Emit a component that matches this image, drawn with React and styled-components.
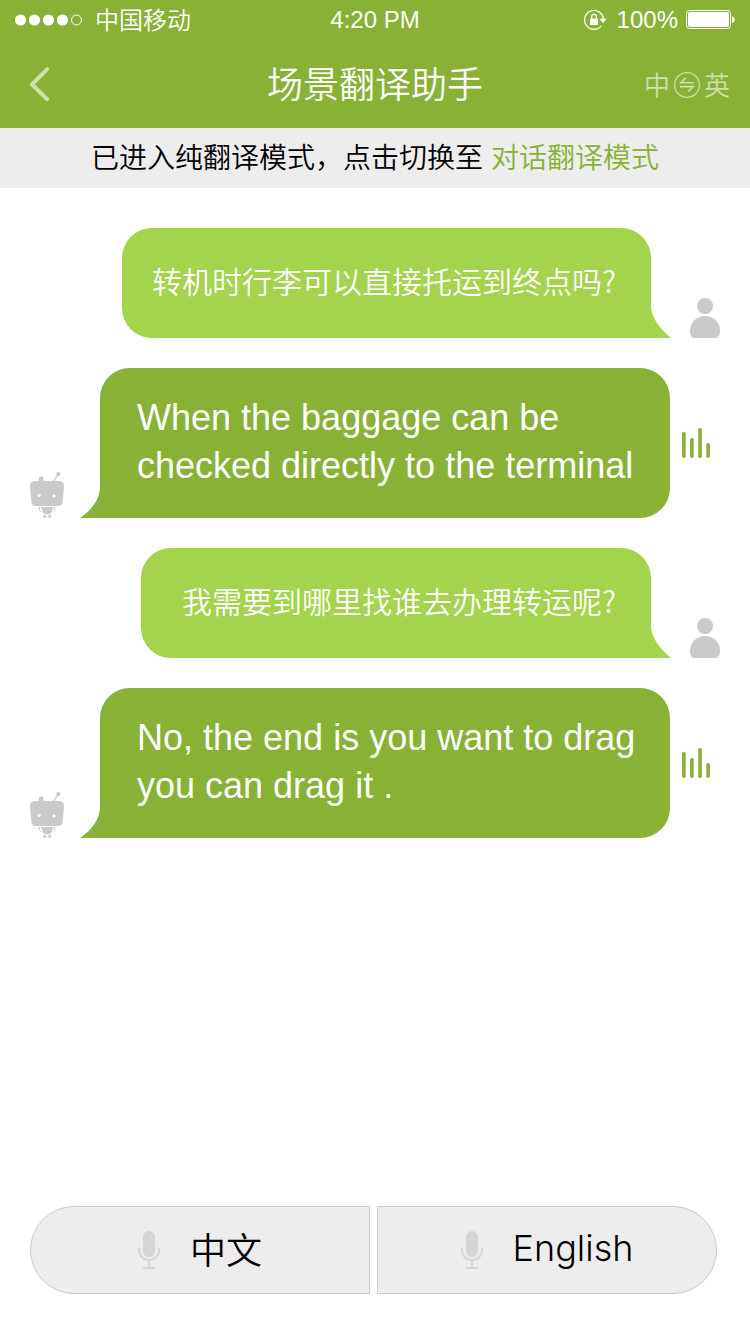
import React from "react";
import styled, { createGlobalStyle, css } from "styled-components";

const green = "#88b135";
const lightGreen = "#a4d34d";
const grey = "#cacaca";
const cjk = '"Noto Sans CJK SC", sans-serif';
const latin = '"Liberation Sans", "Noto Sans CJK SC", sans-serif';

const GlobalStyle = createGlobalStyle`
  * { box-sizing: border-box; }
  body { margin: 0; background: #fff; }
  button { margin: 0; padding: 0; border: 0; background: none; font: inherit; color: inherit; cursor: pointer; }
  svg { display: block; flex: none; }
`;

const Page = styled.div`
  display: flex;
  flex-direction: column;
  min-height: 100vh;
  font-family: ${cjk};
  font-weight: 350;
  color: #000;
`;

const Header = styled.header`
  background: ${green};
  color: #fff;
`;

const StatusBar = styled.div`
  display: grid;
  grid-template-columns: 1fr auto 1fr;
  align-items: center;
  height: 40px;
  padding: 0 15px;
  font-size: 24px;
  line-height: 40px;
`;

const Carrier = styled.div`
  display: flex;
  align-items: center;
  gap: 12px;
`;

const CarrierName = styled.span`
  padding-bottom: 2px;
  line-height: 38px;
`;

const Clock = styled.time`
  font-family: ${latin};
  font-weight: 400;
`;

const Power = styled.div`
  display: flex;
  align-items: center;
  justify-content: flex-end;
  gap: 8px;
  font-family: ${latin};
  font-weight: 400;
`;

const NavBar = styled.nav`
  display: grid;
  grid-template-columns: 1fr auto 1fr;
  align-items: center;
  height: 88px;
  padding: 0 20px;
`;

const BackButton = styled.button`
  justify-self: start;
  padding: 8px;
`;

const Title = styled.h1`
  margin: 0;
  padding-bottom: 4px;
  font-size: 36px;
  line-height: 84px;
  font-weight: inherit;
`;

const LanguageSwitch = styled.button`
  justify-self: end;
  display: flex;
  align-items: center;
  gap: 4px;
  font-size: 26px;
  line-height: 40px;
  opacity: 0.6;
`;

const Notice = styled.p`
  display: flex;
  justify-content: center;
  gap: 8px;
  margin: 0;
  padding: 0 20px 4px;
  background: #ededed;
  font-size: 28px;
  line-height: 56px;
`;

const ModeLink = styled.a`
  color: ${green};
  text-decoration: none;
`;

const Messages = styled.ul`
  flex: 1;
  display: flex;
  flex-direction: column;
  gap: 30px;
  margin: 0;
  padding: 40px 30px;
  list-style: none;
`;

const Message = styled.li`
  display: flex;
  align-items: flex-end;
  justify-content: ${(p) => (p.$own ? "flex-end" : "flex-start")};
  gap: ${(p) => (p.$own ? "39px" : "36px")};
`;

const Bubble = styled.div`
  position: relative;
  color: #fff;
  ${(p) =>
    p.$own
      ? css`
          min-width: 510px;
          padding: 27px 35px 33px 30px;
          border-radius: 30px 30px 0 30px;
          background: ${lightGreen};
          font-size: 30px;
          line-height: 50px;
          text-align: right;
        `
      : css`
          flex: 1;
          padding: 26px 30px 28px 37px;
          border-radius: 30px 30px 30px 0;
          background: ${green};
          font-family: ${latin};
          font-weight: 400;
          font-size: 36px;
          line-height: 48px;
        `}
`;

const Tail = styled.svg`
  position: absolute;
  bottom: 0;
  ${(p) => (p.$own ? "left: 100%;" : "right: 100%;")}
`;

const Reply = styled.div`
  flex: 1;
  display: flex;
  align-items: center;
  gap: 12px;
  padding-right: 10px;
`;

const PlayButton = styled.button`
  flex: none;
`;

const TalkBar = styled.footer`
  display: flex;
  gap: 7px;
  padding: 0 33px 40px 30px;
`;

const TalkButton = styled.button`
  flex: 1;
  display: flex;
  align-items: center;
  justify-content: center;
  gap: 30px;
  height: 88px;
  border: 1px solid #cacaca;
  border-radius: ${(p) => (p.$side === "left" ? "44px 0 0 44px" : "0 44px 44px 0")};
  background: #ededed;
  font-family: Inter, ${cjk};
  font-size: 36px;
`;

const TalkLabel = styled.span`
  padding-bottom: 4px;
  font-weight: ${(p) => (p.lang === "en" ? 300 : 350)};
`;

const Signal = () => (
  <svg width="68" height="12" viewBox="0 0 68 12" aria-hidden="true">
    {[5.5, 19.5, 33.5, 47.5].map((x) => (
      <circle key={x} cx={x} cy="6" r="5.6" fill="#fff" />
    ))}
    <circle cx="61.5" cy="6" r="5" fill="none" stroke="#fff" />
  </svg>
);

const RotationLock = () => (
  <svg width="26" height="22" viewBox="0 0 26 22" aria-hidden="true">
    <path d="M18.3 16.8A9.4 9.4 0 1 1 20.4 10" fill="none" stroke="#fff" strokeWidth="1.3" />
    <path d="M16.4 9.800h7.400L20.100 14z" fill="#fff" />
    <rect x="7" y="9.400" width="8" height="6.600" rx="0.600" fill="#fff" />
    <path d="M8.700 9.600V7.500a2.300 2.300 0 0 1 4.600 0v2.100" fill="none" stroke="#fff" strokeWidth="1.300" />
  </svg>
);

const Battery = () => (
  <svg width="49" height="20" viewBox="0 0 49 20" aria-hidden="true">
    <rect x="0.5" y="0.5" width="44" height="18" rx="3" fill="none" stroke="#fff" />
    <rect x="2" y="2" width="41" height="15" rx="2" fill="#fff" />
    <path d="M46 6.200c3.600.6 3.600 6.200 0 6.800z" fill="#fff" />
  </svg>
);

const Chevron = () => (
  <svg width="24" height="36" viewBox="0 0 24 36" aria-hidden="true">
    <path d="M19.200 3.200 4 18.400l15.200 14.800" fill="none" stroke="#fff" strokeOpacity="0.6" strokeWidth="4" strokeLinecap="round" strokeLinejoin="round" />
  </svg>
);

const Swap = () => (
  <svg width="26" height="28" viewBox="0 0 26 28" fill="none" stroke="#fff" aria-hidden="true">
    <circle cx="13" cy="15" r="12.400" strokeWidth="1.200" />
    <path d="M19.800 12.800H6.800l5-4.900M6 16.600h13.200l-5 4.900" strokeWidth="1.600" />
  </svg>
);

const Person = () => (
  <svg width="30" height="40" viewBox="0 0 30 40" fill={grey} role="img" aria-label="我">
    <circle cx="15" cy="8" r="8" />
    <path d="M15 18c8.500 0 15 6.500 15 14.500 0 5-1.500 7.500-5.500 7.500h-19C1.500 40 0 37.500 0 32.500 0 24.500 6.500 18 15 18z" />
  </svg>
);

const Robot = () => (
  <svg width="34" height="46" viewBox="0 0 34 46" fill={grey} role="img" aria-label="翻译助手">
    <path d="M8.500 10V7a2.500 2.500 0 0 1 5 0v3z" />
    <path d="M23 10 28 2.500" stroke={grey} strokeWidth="1.300" />
    <circle cx="28.300" cy="2" r="2" />
    <path d="M5 9h24c3.500 0 5.200 2 5 5.500l-1.300 15c-.3 3-1.700 4.500-4.700 4.500H6c-3 0-4.400-1.500-4.700-4.500L0 14.500C-.2 11 1.500 9 5 9z" />
    <circle cx="9.200" cy="23.500" r="1.600" fill="#fff" />
    <circle cx="24" cy="24" r="1.600" fill="#fff" />
    <path d="M11 35h12.500l-1.600 4.500c-.8 1.800-1.700 2.500-3.200 2.500h-3c-1.500 0-2.400-.7-3.200-2.500z" />
    <path d="m9.800 35-.5 3 1.700 1.500M24.700 35l.5 3-1.700 1.500" fill="none" stroke={grey} />
    <circle cx="14.800" cy="44.300" r="1.600" />
    <circle cx="19.700" cy="44.300" r="1.600" />
  </svg>
);

const SoundBars = () => (
  <svg width="28" height="30" viewBox="0 0 28 30" fill={green} aria-hidden="true">
    <rect x="0" y="4" width="3.700" height="26" rx="1.800" />
    <rect x="8" y="10" width="3.700" height="20" rx="1.800" />
    <rect x="16.200" y="0" width="3.700" height="30" rx="1.800" />
    <rect x="24.300" y="15" width="3.700" height="15" rx="1.800" />
  </svg>
);

const Mic = () => (
  <svg width="22" height="38" viewBox="0 0 22 38" aria-hidden="true">
    <rect x="5" y="0" width="12" height="26" rx="6" fill="#d5d5d5" />
    <path d="M1 17v2.500a10 9.500 0 0 0 20 0V17M11 29v8M5 37h12" fill="none" stroke="#d5d5d5" strokeWidth="2" />
  </svg>
);

const OwnMessage = ({ children }) => (
  <Message $own>
    <Bubble $own>
      {children}
      <Tail $own width="20" height="30" viewBox="0 0 20 30" aria-hidden="true">
        <path d="M-1 0H0C1 10 9 21 20 30H-1z" fill={lightGreen} />
      </Tail>
    </Bubble>
    <Person />
  </Message>
);

const AssistantMessage = ({ children }) => (
  <Message>
    <Robot />
    <Reply>
      <Bubble>
        {children}
        <Tail width="20" height="30" viewBox="0 0 20 30" aria-hidden="true">
          <path d="M21 0H20C19.500 11 12 22 0 30H21z" fill={green} />
        </Tail>
      </Bubble>
      <PlayButton type="button" aria-label="播放">
        <SoundBars />
      </PlayButton>
    </Reply>
  </Message>
);

export default function App() {
  return (
    <Page>
      <GlobalStyle />
      <Header>
        <StatusBar>
          <Carrier>
            <Signal />
            <CarrierName>中国移动</CarrierName>
          </Carrier>
          <Clock>4:20 PM</Clock>
          <Power>
            <RotationLock />
            100%
            <Battery />
          </Power>
        </StatusBar>
        <NavBar>
          <BackButton type="button" aria-label="返回">
            <Chevron />
          </BackButton>
          <Title>场景翻译助手</Title>
          <LanguageSwitch type="button">
            <span>中</span>
            <Swap />
            <span>英</span>
          </LanguageSwitch>
        </NavBar>
      </Header>
      <Notice>
        <span>已进入纯翻译模式，点击切换至</span>
        <ModeLink href="#dialogue">对话翻译模式</ModeLink>
      </Notice>
      <Messages>
        <OwnMessage>转机时行李可以直接托运到终点吗?</OwnMessage>
        <AssistantMessage>When the baggage can be checked directly to the terminal</AssistantMessage>
        <OwnMessage>我需要到哪里找谁去办理转运呢?</OwnMessage>
        <AssistantMessage>No, the end is you want to drag you can drag it .</AssistantMessage>
      </Messages>
      <TalkBar>
        <TalkButton type="button" $side="left">
          <Mic />
          <TalkLabel lang="zh">中文</TalkLabel>
        </TalkButton>
        <TalkButton type="button" $side="right">
          <Mic />
          <TalkLabel lang="en">English</TalkLabel>
        </TalkButton>
      </TalkBar>
    </Page>
  );
}
